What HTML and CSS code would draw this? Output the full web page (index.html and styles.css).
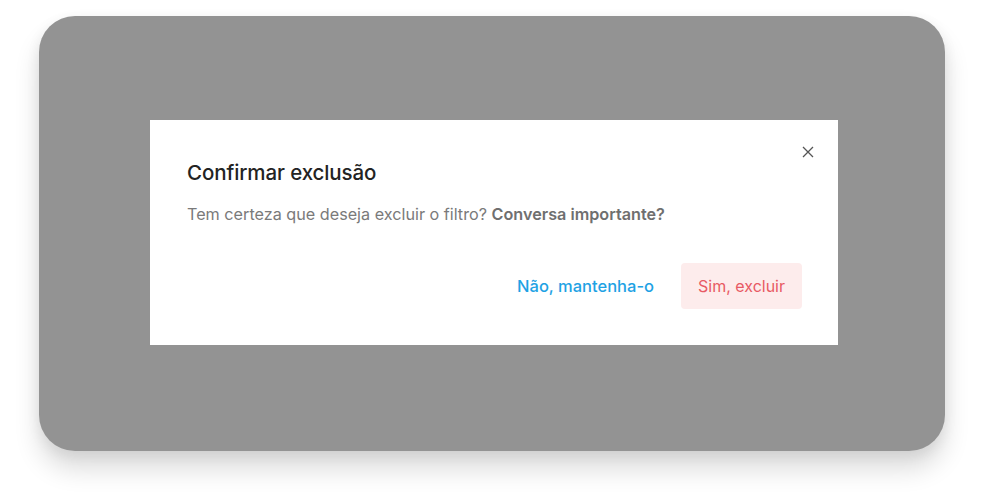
FILE: index.html
```html
<!DOCTYPE html>
<html lang="pt">
<head>
<meta charset="utf-8">
<link rel="stylesheet" href="styles.css">
</head>
<body>
<div class="frame">
  <div class="modal">
    <div class="modal-head">
      <h2 class="title">Confirmar exclusão</h2>
      <button class="close" aria-label="Fechar">
        <svg width="12" height="12" viewBox="0 0 12 12"><path d="M1 1L11 11M11 1L1 11" stroke="#555" stroke-width="1.3" fill="none"/></svg>
      </button>
    </div>
    <p class="text">Tem certeza que deseja excluir o filtro? <strong>Conversa importante?</strong></p>
    <div class="actions">
      <button class="btn btn-link">Não, mantenha-o</button>
      <button class="btn btn-danger">Sim, excluir</button>
    </div>
  </div>
</div>
</body>
</html>
```
FILE: styles.css
```css
* { box-sizing: border-box; }
html, body { margin: 0; padding: 0; background: #fff; }
body { font-family: Inter, "Open Sans", sans-serif; min-height: 497px; }
.frame {
  margin: 16px 0 0 39px;
  width: 906px;
  height: 435px;
  border-radius: 36px;
  background: #939393;
  box-shadow: 0 18px 26px rgba(0,0,0,0.14), 0 4px 14px rgba(0,0,0,0.07);
  padding: 104px 0 0 111px;
}
.modal {
  width: 688px;
  height: 225px;
  background: #fff;
  padding: 26px 18px 36px 37px;
  display: flex;
  flex-direction: column;
}
.modal-head {
  display: flex;
  justify-content: space-between;
  align-items: flex-start;
}
.title {
  margin: 14px 0 0;
  font-size: 20.5px;
  font-weight: 500;
  color: #232323;
  line-height: 26px;
  letter-spacing: -0.1px;
}
.close {
  border: 0;
  background: none;
  padding: 0;
  margin: -6px 0 0;
  width: 24px;
  height: 24px;
  display: flex;
  align-items: center;
  justify-content: center;
  cursor: pointer;
}
.text {
  margin: 17px 0 0;
  font-size: 16.2px;
  line-height: 22px;
  color: #7a7a7a;
}
.text strong { font-weight: 600; color: #6f6f6f; }
.actions {
  margin-top: auto;
  display: flex;
  justify-content: flex-end;
  align-items: center;
  gap: 9px;
  padding-right: 18px;
}
.btn {
  border: 0;
  font-family: inherit;
  font-size: 16px;
  height: 46px;
  border-radius: 4px;
  padding: 0 17px;
  cursor: pointer;
}
.btn-link { background: none; color: #1ea2e4; font-weight: 500; padding: 0 18px; font-size: 16.5px; }
.btn-danger { background: #fdecec; color: #e85a64; font-weight: 400; }
```
